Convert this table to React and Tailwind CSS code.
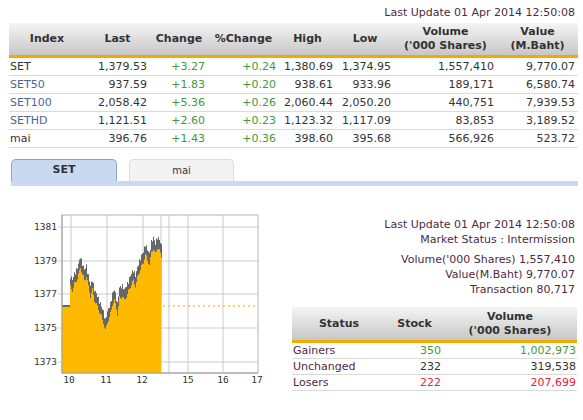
import React from 'react';

const indexRows = [
  { name: 'SET', color: 'text-[#333333]', last: '1,379.53', chg: '+3.27', pct: '+0.24', high: '1,380.69', low: '1,374.95', vol: '1,557,410', val: '9,770.07' },
  { name: 'SET50', color: 'text-[#4a6795]', last: '937.59', chg: '+1.83', pct: '+0.20', high: '938.61', low: '933.96', vol: '189,171', val: '6,580.74' },
  { name: 'SET100', color: 'text-[#4a6795]', last: '2,058.42', chg: '+5.36', pct: '+0.26', high: '2,060.44', low: '2,050.20', vol: '440,751', val: '7,939.53' },
  { name: 'SETHD', color: 'text-[#4a6795]', last: '1,121.51', chg: '+2.60', pct: '+0.23', high: '1,123.32', low: '1,117.09', vol: '83,853', val: '3,189.52' },
  { name: 'mai', color: 'text-[#3d2a2e]', last: '396.76', chg: '+1.43', pct: '+0.36', high: '398.60', low: '395.68', vol: '566,926', val: '523.72' },
];

const statusRows = [
  { label: 'Gainers', stock: '350', vol: '1,002,973', color: 'text-[#3f9a3c]' },
  { label: 'Unchanged', stock: '232', vol: '319,538', color: 'text-[#333333]' },
  { label: 'Losers', stock: '222', vol: '207,699', color: 'text-[#e5253a]' },
];

// rough intraday trace, page coordinates
const keys = [
  [62, 306], [69, 306], [70, 282], [72, 286], [74, 280], [77, 274], [80, 263], [82, 270],
  [84, 276], [86, 272], [88, 282], [90, 292], [92, 286], [94, 296], [97, 302], [100, 310],
  [103, 318], [105, 326], [107, 318], [110, 310], [112, 300], [114, 296], [116, 304], [117, 310],
  [119, 294], [122, 292], [124, 296], [127, 290], [130, 282], [133, 276], [135, 282], [138, 270],
  [141, 262], [143, 258], [145, 250], [147, 256], [149, 260], [151, 248], [153, 244], [155, 250],
  [157, 243], [159, 246], [161, 252],
];

function interp(x) {
  for (let i = 0; i < keys.length - 1; i++) {
    const [x0, y0] = keys[i];
    const [x1, y1] = keys[i + 1];
    if (x >= x0 && x <= x1) return y0 + ((y1 - y0) * (x - x0)) / (x1 - x0 || 1);
  }
  return keys[keys.length - 1][1];
}

function buildSeries() {
  const top = [];
  const bottom = [];
  for (let x = 62; x <= 161; x++) {
    const y = interp(x);
    const flat = x < 70;
    const n = flat ? 1 : 3 + 5 * Math.abs(Math.sin(x * 1.3));
    const m = flat ? 1 : 2 + 4 * Math.abs(Math.cos(x * 0.7));
    // step shape like tick bars
    top.push([x, y - n], [x + 1, y - n]);
    bottom.push([x, y + m], [x + 1, y + m]);
  }
  return { top, bottom };
}

function Chart() {
  const { top, bottom } = buildSeries();
  const gray = [...top, ...bottom.slice().reverse()].map((p) => p.join(',')).join(' ');
  const orange = [[62, 373], ...bottom, [161, 373]].map((p) => p.join(',')).join(' ');
  const hLines = [227, 261, 294, 328, 362];
  const vLines = [71, 107, 143, 161, 169, 188, 223];
  const yLabels = [['1381', 227], ['1379', 261], ['1377', 294], ['1375', 328], ['1373', 362]];
  const xLabels = [['10', 69], ['11', 106], ['12', 142], ['15', 188], ['16', 223], ['17', 257]];

  return (
    <svg width="272" height="190" viewBox="0 205 272 190" className="shrink-0">
      <rect x="62" y="215" width="196" height="158" fill="#ffffff" stroke="#b4b4b4" />
      {hLines.map((y) => (
        <line key={y} x1="58" x2="258" y1={y} y2={y} stroke="#cbcbcb" />
      ))}
      {vLines.map((x) => (
        <line key={x} x1={x} x2={x} y1="215" y2="373" stroke="#cbcbcb" />
      ))}
      <polygon points={orange} fill="#ffb900" />
      <polygon points={gray} fill="#676767" />
      <line x1="163" x2="258" y1="306" y2="306" stroke="#f6c545" strokeWidth="1.5" strokeDasharray="2 3" />
      <line x1="62" x2="62" y1="215" y2="373" stroke="#a0a0a0" />
      <line x1="62" x2="258" y1="373" y2="373" stroke="#a0a0a0" />
      {yLabels.map(([t, y]) => (
        <text key={t} x="57" y={y + 3} textAnchor="end" fontSize="9.5" fill="#333" fontFamily="'DejaVu Sans Mono', monospace">
          {t}
        </text>
      ))}
      {xLabels.map(([t, x]) => (
        <text key={t} x={x} y="383" textAnchor="middle" fontSize="9.5" fill="#333" fontFamily="'DejaVu Sans Mono', monospace">
          {t}
        </text>
      ))}
    </svg>
  );
}

export default function App() {
  return (
    <div className="w-[583px] h-[420px] bg-white overflow-hidden text-[11px] text-[#333333] font-['DejaVu_Sans',sans-serif]">
      {/* Top update line */}
      <div className="h-[23px] pt-[6px] pr-[8px] text-right leading-[14px] text-[#4e2a44]">
        Last Update 01 Apr 2014 12:50:08
      </div>

      {/* Index table */}
      <div className="ml-[9px] w-[569px]">
        <div className="grid grid-cols-[76px_65px_58px_71px_57px_58px_103px_81px] h-[35px] items-center bg-linear-to-b from-[#f5f5f5] to-[#c7c7c7] border-b-[3px] border-[#f2a900] font-bold text-center leading-[14px]">
          <div>Index</div>
          <div>Last</div>
          <div>Change</div>
          <div>%Change</div>
          <div>High</div>
          <div>Low</div>
          <div>Volume<br />('000 Shares)</div>
          <div>Value<br />(M.Baht)</div>
        </div>
        {indexRows.map((r) => (
          <div
            key={r.name}
            className="grid grid-cols-[76px_65px_58px_71px_57px_58px_103px_81px] h-[18px] items-center border-b border-[#dadada] leading-[17px] text-right"
          >
            <div className={`text-left pl-[1px] ${r.color}`}>{r.name}</div>
            <div className="pr-[3px]">{r.last}</div>
            <div className="pr-[3px] text-[#3f9a3c]">{r.chg}</div>
            <div className="pr-[3px] text-[#3f9a3c]">{r.pct}</div>
            <div className="pr-[3px]">{r.high}</div>
            <div className="pr-[3px]">{r.low}</div>
            <div className="pr-[3px]">{r.vol}</div>
            <div className="pr-[3px]">{r.val}</div>
          </div>
        ))}
      </div>

      {/* Tabs */}
      <div className="mt-[10px] ml-[11px] w-[567px]">
        <div className="flex gap-[12px] h-[23px] items-end">
          <div className="w-[106px] h-[22px] rounded-t-[5px] border border-b-0 border-[#8fa3c4] bg-[#c9d9f1] flex items-center justify-center font-bold">
            SET
          </div>
          <div className="w-[105px] h-[22px] rounded-t-[5px] border border-b-0 border-[#dcdcdc] bg-[#f3f3f3] flex items-center justify-center text-[10px]">
            mai
          </div>
        </div>
        <div className="h-[5px] bg-[#c9d9f1]" />
      </div>

      {/* Chart and market summary */}
      <div className="flex">
        <div className="pt-[19px]">
          <Chart />
        </div>
        <div className="flex-1 flex flex-col items-end pt-[31px] pr-[6px]">
          <div className="pr-[2px] text-right leading-[15px] text-[#4e2a44]">
            <div>Last Update 01 Apr 2014 12:50:08</div>
            <div>Market Status : Intermission</div>
            <div className="mt-[5px]">Volume('000 Shares) 1,557,410</div>
            <div>Value(M.Baht) 9,770.07</div>
            <div>Transaction 80,717</div>
          </div>
          <div className="mt-[10px] w-[285px]">
            <div className="grid grid-cols-[94px_57px_134px] h-[36px] items-center bg-linear-to-b from-[#f5f5f5] to-[#c7c7c7] border-b-[3px] border-[#f2a900] font-bold text-center leading-[14px]">
              <div>Status</div>
              <div>Stock</div>
              <div>Volume<br />('000 Shares)</div>
            </div>
            {statusRows.map((r) => (
              <div
                key={r.label}
                className="grid grid-cols-[94px_57px_134px] h-[16px] items-center border-b border-[#dadada] leading-[15px] text-right"
              >
                <div className="text-left pl-[1px] text-[#4e2a44]">{r.label}</div>
                <div className={`pr-[2px] ${r.color}`}>{r.stock}</div>
                <div className={`pr-[1px] ${r.color}`}>{r.vol}</div>
              </div>
            ))}
          </div>
        </div>
      </div>
    </div>
  );
}
